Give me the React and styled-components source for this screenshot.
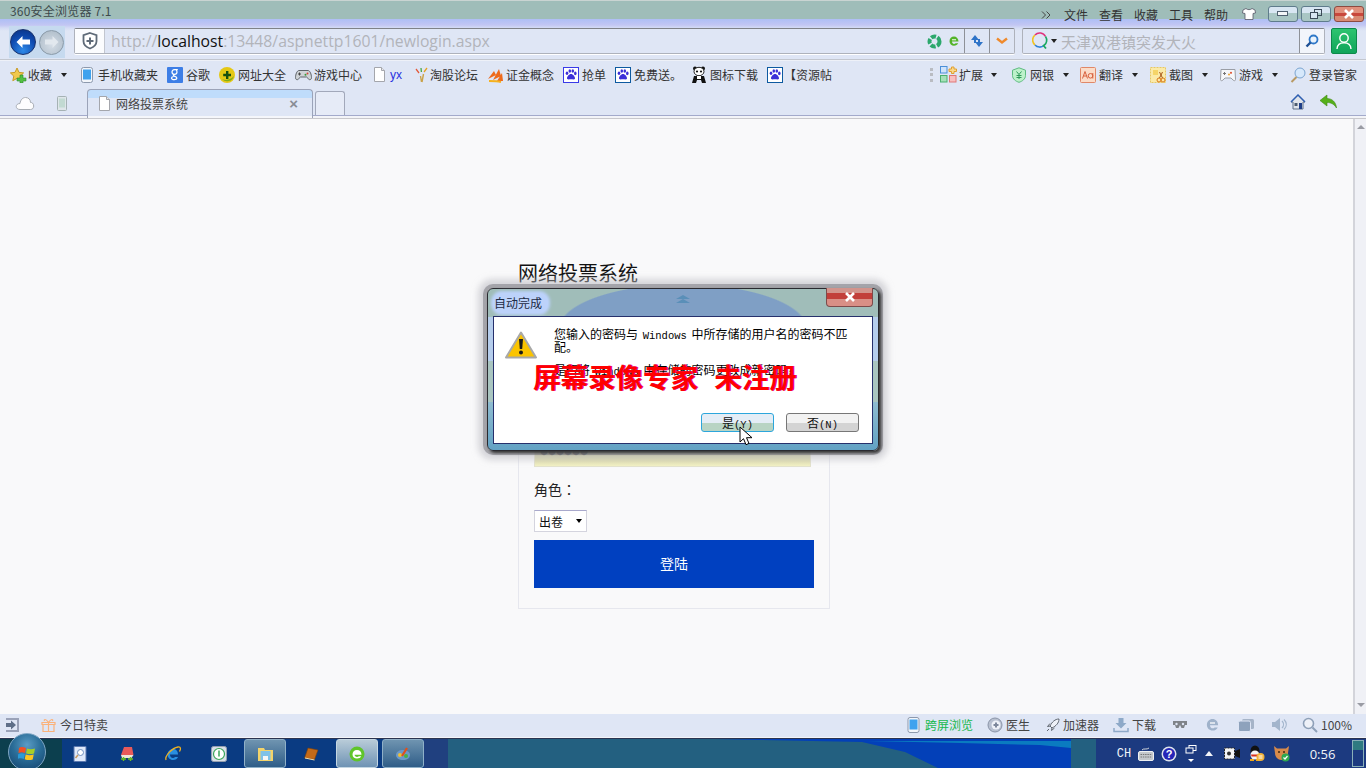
import React from 'react';
import styled, { createGlobalStyle } from 'styled-components';

const Global = createGlobalStyle`
  html, body { margin: 0; padding: 0; overflow: hidden; background: #f9f9fa; }
  body { font-family: "Noto Sans CJK SC", "Liberation Sans", sans-serif; font-size: 12px; color: #333; }
`;

const Frame = styled.div`
  position: relative;
  width: 1366px;
  height: 768px;
  display: flex;
  flex-direction: column;
  overflow: hidden;
`;

const TitleBar = styled.div`
  height: 19px;
  flex: none;
  display: flex;
  align-items: flex-start;
  background: #9fbdb9;
  border-top: 1px solid #c9d4d2;
  box-sizing: border-box;
  position: relative;
  z-index: 2;
`;
const AppName = styled.span`
  margin: 2px 0 0 10px;
  line-height: 16px;
  color: #3d4a4c;
  letter-spacing: 0.2px;
`;
const TitleMenu = styled.div`
  margin-left: auto;
  display: flex;
  align-items: flex-start;
`;
const MenuItem = styled.span`
  width: 35px;
  margin-top: 6px;
  line-height: 16px;
  color: #333;
`;
const MoreItem = styled.span`
  width: 23px;
  margin-top: 10px;
`;
const Shirt = styled.span`
  width: 14px;
  margin: 7px 0 0 3px;
  height: 14px;
`;
const WinButtons = styled.div`
  display: flex;
  gap: 3px;
  margin: 5px 2px 0 12px;
`;
const WinButton = styled.div`
  width: 30px;
  height: 16px;
  box-sizing: border-box;
  border: 1px solid ${p => (p.$close ? '#8d4a40' : '#5f7c8c')};
  border-radius: 3px;
  display: flex;
  align-items: center;
  justify-content: center;
  background: ${p => (p.$close
    ? 'linear-gradient(#e0907c 0 45%, #c8483c 45% 62%, #d88a72 62%)'
    : 'linear-gradient(#d8e6f2 0 45%, #a9c6c4 45% 100%)')};
`;

const NavBar = styled.div`
  height: 41px;
  flex: none;
  display: flex;
  align-items: flex-start;
  box-sizing: border-box;
  padding: 9px 0 0 9px;
  background: linear-gradient(#aebff5 0, #c2c6f3 6px, #d4dcf4 9px, #dfe6f5 12px);
  border-bottom: 1px solid #c3c7cf;
`;
const NavButtons = styled.div`
  width: 56px;
  height: 32px;
  margin-top: -2px;
  display: flex;
  align-items: center;
  background: #c6daef;
`;
const BackButton = styled.div`
  width: 26px;
  height: 26px;
  margin-left: 1px;
  border-radius: 50%;
  box-sizing: border-box;
  border: 1px solid #16306c;
  background: radial-gradient(circle at 50% 85%, #2f8ae8 0, #0f4bb0 55%, #0a2f80 100%);
  display: flex;
  align-items: center;
  justify-content: center;
`;
const ForwardButton = styled(BackButton)`
  width: 25px;
  height: 25px;
  margin-left: 3px;
  border-color: #8a9aa8;
  background: radial-gradient(circle at 50% 60%, #d5dde6 0, #b6c3cf 70%, #a5b3c0 100%);
`;
const Field = styled.div`
  height: 26px;
  box-sizing: border-box;
  display: flex;
  align-items: center;
  background: #dfe6f5;
  border: 1px solid #aeb2bb;
  border-top-color: #7f8288;
  border-radius: 2px;
  box-shadow: 0 1px 0 #fff;
`;
const AddressField = styled(Field)`
  width: 941px;
  margin-left: 9px;
`;
const ShieldCell = styled.div`
  width: 29px;
  height: 100%;
  background: #fbfcfe;
  border-right: 1px solid #c2c6cf;
  display: flex;
  align-items: center;
  justify-content: center;
  flex: none;
`;
const Url = styled.div`
  margin-left: 6px;
  font-family: "Open Sans", sans-serif;
  font-size: 15.75px;
  color: #b2b4ba;
  white-space: nowrap;
  b { font-weight: 400; color: #111; }
`;
const AddressTools = styled.div`
  margin-left: auto;
  height: 100%;
  display: flex;
  align-items: center;
`;
const ToolCell = styled.div`
  width: 24px;
  height: 100%;
  flex: none;
  display: flex;
  align-items: center;
  justify-content: center;
  border-left: 1px solid #8e9198;
`;
const PlainCell = styled.div`
  width: ${p => p.$w}px;
  height: 100%;
  display: flex;
  align-items: center;
  justify-content: center;
`;
const SearchField = styled(Field)`
  width: 303px;
  margin-left: 7px;
  padding-left: 9px;
`;
const SearchText = styled.span`
  margin-left: 4px;
  font-size: 15px;
  color: #b2b4ba;
  white-space: nowrap;
`;
const UserButton = styled.div`
  width: 26px;
  height: 26px;
  margin-left: 6px;
  border-radius: 2px;
  background: linear-gradient(#2dc46f, #0fa45a);
  border: 1px solid #0c8a4a;
  box-sizing: border-box;
  display: flex;
  align-items: center;
  justify-content: center;
`;
const SearchGo = styled.div`
  margin-left: auto;
  width: 24px;
  height: 100%;
  display: flex;
  align-items: center;
  justify-content: center;
  background: #f2f5fb;
  border-left: 1px solid #8e9198;
`;

const BookmarkBar = styled.div`
  height: 28px;
  flex: none;
  display: flex;
  align-items: center;
  box-sizing: border-box;
  padding-left: 10px;
  background: #dfe6f5;
  border-top: 1px solid #eef1f8;
`;
const Bookmark = styled.div`
  width: ${p => p.$w}px;
  flex: none;
  display: flex;
  align-items: center;
  gap: ${p => p.$gap ?? 3}px;
  white-space: nowrap;
  color: #333;
  line-height: 16px;
`;
const Yx = styled.span`
  color: #2a32e0;
  font-family: "Liberation Sans", sans-serif;
`;
const Caret = styled.i`
  width: 0;
  height: 0;
  display: block;
  margin-left: ${p => p.$m ?? 8}px;
  border: 3px solid transparent;
  border-top: 4px solid ${p => p.$c ?? '#222'};
  border-bottom: 0;
`;
const Grip = styled.div`
  width: 0;
  height: 14px;
  flex: none;
  margin: 0 7px 0 87px;
  border-left: 3px dotted #b9bcc2;
`;

const TabRow = styled.div`
  height: 30px;
  flex: none;
  display: flex;
  align-items: flex-end;
  box-sizing: border-box;
  background: linear-gradient(#dfe6f5 0 27px, #a3aacb 27px 28px, #f3f4f8 28px);
`;
const TabIcons = styled.div`
  width: 87px;
  height: 30px;
  display: flex;
  align-items: center;
  flex: none;
  padding-left: 15px;
  box-sizing: border-box;
  gap: 22px;
`;
const Tab = styled.div`
  width: 226px;
  height: 29px;
  flex: none;
  box-sizing: border-box;
  display: flex;
  align-items: center;
  padding: 0 14px 2px 10px;
  gap: 5px;
  border: 1px solid #9ba3b8;
  border-bottom: 0;
  border-radius: 4px 4px 0 0;
  background: linear-gradient(#bfdcfb 0 8px, #dfe6f5 8px 26px, #f5f6fa 26px);
  color: #444;
`;
const TabClose = styled.span`
  margin-left: auto;
  font: bold 15px "Liberation Sans", sans-serif;
  color: #888c94;
`;
const NewTab = styled.div`
  width: 30px;
  height: 24px;
  flex: none;
  margin: 0 0 3px 2px;
  box-sizing: border-box;
  border: 1px solid #a2a8ba;
  border-bottom: 0;
  border-radius: 3px 3px 0 0;
  background: #e6ebf7;
`;
const TabRight = styled.div`
  margin-left: auto;
  width: 76px;
  height: 27px;
  margin-bottom: 3px;
  display: flex;
  align-items: center;
  gap: 13px;
`;

const Viewport = styled.div`
  flex: 1;
  min-height: 0;
  display: flex;
  background: #f9f9fa;
  border-top: 1px solid #c8c8cc;
`;
const Page = styled.div`
  flex: 1;
  padding: 140px 0 0 518px;
  box-sizing: border-box;
`;
const PageTitle = styled.h1`
  margin: 0 0 4px;
  font-size: 20px;
  font-weight: 400;
  line-height: 28px;
  color: #111;
`;
const LoginCard = styled.div`
  width: 312px;
  height: 318px;
  box-sizing: border-box;
  padding: 35px 15px 0;
  background: #f9f9fa;
  border: 1px solid #e6e7ee;
  display: flex;
  flex-direction: column;
`;
const FieldLabel = styled.label`
  font-family: "Noto Sans CJK TC", sans-serif;
  font-size: 14px;
  line-height: 20px;
  color: #222;
`;
const TextInput = styled.div`
  width: 277px;
  height: 36px;
  margin: 8px 0 12px;
  box-sizing: border-box;
  border: 1px solid #e3e2cc;
  background: linear-gradient(#8f8c68 0 50%, #c4c08e 55%, #f3f2c4);
  font-size: 8px;
  line-height: 39px;
  padding: 0 0 0 5px;
  color: #000;
`;
const RoleSelect = styled.div`
  width: 53px;
  height: 22px;
  margin-top: 11px;
  box-sizing: border-box;
  border: 1px solid #d4d4de;
  border-top-color: #a9a9cc;
  background: #fff;
  display: flex;
  align-items: center;
  padding-left: 4px;
  font-size: 12px;
  color: #111;
`;
const LoginButton = styled.button`
  width: 280px;
  height: 48px;
  margin-top: 8px;
  padding: 0 0 3px;
  border: 0;
  background: #0040c0;
  color: #fff;
  font: 14px "Noto Sans CJK SC", sans-serif;
`;
const Scrollbar = styled.div`
  width: 13px;
  flex: none;
  box-sizing: border-box;
  background: #f0f1f6;
  border-left: 2px solid #d3d4da;
  display: flex;
  flex-direction: column;
  justify-content: space-between;
  align-items: center;
  padding: 6px 0 7px;
`;
const ScrollUp = styled.i`
  display: block;
  width: 0;
  height: 0;
  border: 4px solid transparent;
  border-bottom: 4px solid #9a9ca4;
  border-top: 0;
`;
const ScrollDown = styled(ScrollUp)`
  border-bottom: 0;
  border-top: 4px solid #9a9ca4;
`;

const StatusBar = styled.div`
  height: 24px;
  flex: none;
  display: flex;
  align-items: center;
  background: #dfe6f5;
  padding: 0 0 2px 4px;
  box-sizing: border-box;
  border-bottom: 1px solid #f3f4f8;
`;
const StatusItem = styled.div`
  width: ${p => p.$w}px;
  flex: none;
  margin-left: ${p => p.$m ?? 0}px;
  display: flex;
  align-items: center;
  gap: ${p => p.$gap ?? 3}px;
  white-space: nowrap;
  color: ${p => p.$c ?? '#444'};
`;

const Taskbar = styled.div`
  position: relative;
  height: 30px;
  flex: none;
  display: flex;
  align-items: center;
  border-top: 1px solid #2a3350;
  box-sizing: border-box;
  background: linear-gradient(90deg, #0c3f4e 0 62px, #0a3b82 62px 424px, #20407f 424px 448px,
    #236080 448px 1096px, #1c3a80 1096px);
  &::before {
    content: "";
    position: absolute;
    inset: 0;
    background: #0340b8;
    clip-path: polygon(715px 0, 1071px 0, 1071px 30px, 940px 30px, 905px 13px, 862px 3px, 760px 1px);
  }
  &::after {
    content: "";
    position: absolute;
    inset: 0;
    background: #0a7bc0;
    clip-path: polygon(866px 2px, 1071px 2px, 1071px 9px, 1040px 6px, 960px 4px);
  }
`;
const StartOrb = styled.div`
  position: absolute;
  left: 8px;
  top: -6px;
  width: 38px;
  height: 38px;
  border-radius: 50%;
  box-sizing: border-box;
  border: 1px solid #7fa6c4;
  background: radial-gradient(circle at 50% 30%, #5b9cc4 0, #2a6d98 45%, #123f6a 100%);
  display: flex;
  align-items: center;
  justify-content: center;
  z-index: 3;
`;
const TaskSlot = styled.div`
  position: relative;
  z-index: 1;
  width: ${p => p.$w ?? 42}px;
  height: 29px;
  flex: none;
  margin-left: ${p => p.$m ?? 4}px;
  display: flex;
  align-items: center;
  justify-content: center;
  box-sizing: border-box;
  border-radius: 3px;
  ${p => p.$open && `
    border: 1px solid #8fb0c8;
    background: linear-gradient(#6f94b0, #2f5d88);
  `}
  ${p => p.$active && `
    border: 1px solid #c4d6e2;
    background: linear-gradient(#b8cbd8, #6f93b4);
  `}
`;
const TaskList = styled.div`
  margin-left: 60px;
  display: flex;
  align-items: center;
`;
const Tray = styled.div`
  position: relative;
  z-index: 1;
  margin-left: auto;
  height: 100%;
  display: flex;
  align-items: center;
`;
const TrayItem = styled.div`
  width: ${p => p.$w}px;
  display: flex;
  justify-content: center;
  align-items: center;
  flex: none;
  color: #f0f4f8;
`;
const ChLabel = styled(TrayItem)`
  font: 12px "Liberation Mono", monospace;
`;
const Clock = styled(TrayItem)`
  font: 13px "Open Sans", sans-serif;
`;
const ShowDesktop = styled.div`
  width: 12px;
  height: 27px;
  margin: 0 2px 0 0;
  border: 1px solid #8ab0b8;
  box-sizing: border-box;
  background: linear-gradient(#2f7a80 0 35%, #1c3a80 35%);
`;

const Dialog = styled.div`
  position: absolute;
  left: 487px;
  top: 288px;
  width: 392px;
  height: 163px;
  box-sizing: border-box;
  padding: 0 5px 6px;
  display: flex;
  flex-direction: column;
  border: 1px solid #2a2a30;
  border-radius: 6px;
  box-shadow: 2px 2px 3px #333, 0 0 0 4px rgba(130, 130, 136, 0.6), 0 0 6px 9px rgba(190, 190, 196, 0.6);
  background:
    radial-gradient(ellipse 125px 45px at 50% 40px, #7f9fc5 98%, transparent 100%) no-repeat,
    linear-gradient(#a0bdb9 0 28px, #b5cdec 28px 45%, #a9c5c0 45% 70%, #8fbcd0 70%, #62a2c4 100%);
  z-index: 4;
`;
const DialogHead = styled.div`
  position: relative;
  height: 27px;
  flex: none;
  display: flex;
  align-items: flex-start;
`;
const HeadMark = styled.div`
  position: absolute;
  left: 183px;
  top: 6px;
`;
const DialogTitle = styled.span`
  margin-top: 4px;
  padding: 1px 6px 1px 1px;
  line-height: 18px;
  border-radius: 9px;
  color: #1c2a44;
  background: #bcd2fa;
  box-shadow: 0 0 3px 2px #bcd2fa;
`;
const DialogClose = styled.div`
  margin: -1px 0 0 auto;
  width: 47px;
  height: 19px;
  box-sizing: border-box;
  border: 1px solid #7d4a4a;
  border-top: 0;
  border-radius: 0 0 4px 4px;
  background: linear-gradient(#d2948c 0 25%, #c23f3a 25% 60%, #d98f86 60%);
  display: flex;
  align-items: center;
  justify-content: center;
`;
const DialogBody = styled.div`
  position: relative;
  flex: 1;
  display: flex;
  flex-direction: column;
  box-sizing: border-box;
  padding: 10px 13px 0 11px;
  background: #fff;
  border: 1px solid #26306c;
`;
const Message = styled.div`
  display: flex;
  gap: 16px;
`;
const WarnWrap = styled.div`
  width: 33px;
  flex: none;
  padding-top: 4px;
`;
const MessageText = styled.div`
  width: 298px;
  font-size: 12px;
  line-height: 13px;
  word-spacing: 2px;
  color: #000;
  p { margin: 0 0 10px; }
`;
const Mono = styled.span`
  font: 10.5px/0 "Liberation Mono", monospace;
`;
const Watermark = styled.div`
  position: absolute;
  left: 39px;
  top: 41px;
  font-size: 27.5px;
  font-weight: 700;
  line-height: 36px;
  word-spacing: 10px;
  color: #f00;
  white-space: nowrap;
  text-shadow: 1px 0 #d000a0;
`;
const DialogActions = styled.div`
  margin-top: auto;
  display: flex;
  justify-content: flex-end;
  gap: 12px;
  padding-bottom: 11px;
`;
const DialogButton = styled.button`
  width: 73px;
  height: 19px;
  padding: 0 0 1px;
  box-sizing: border-box;
  border: 1px solid ${p => (p.$primary ? '#2ca6dc' : '#777')};
  border-radius: 3px;
  background: ${p => (p.$primary
    ? 'linear-gradient(#e4edf6 0 50%, #b8d4c4 50%)'
    : 'linear-gradient(#f2f2f2 0 50%, #d4d4d4 50%)')};
  font: 12px/15px "Noto Sans CJK SC", sans-serif;
  color: #111;
`;
const CursorWrap = styled.div`
  position: absolute;
  left: 245px;
  top: 109px;
  width: 14px;
  height: 20px;
`;

/* ---- icons ---- */
const Svg = styled(({ w = 16, h = 16, vb, children, className }) => (
  <svg className={className} width={w} height={h} viewBox={vb || `0 0 ${w} ${h}`}>{children}</svg>
))`
  display: block;
  flex: none;
`;

const Paw = ({ c = '#3a3ae8' }) => (
  <Svg>
    <rect x=".5" y=".5" width="15" height="15" fill="#fff" stroke={c} />
    <g fill="#3c2fd8">
      <ellipse cx="4" cy="6.2" rx="1.3" ry="1.8" />
      <ellipse cx="6.8" cy="4" rx="1.3" ry="1.8" />
      <ellipse cx="9.8" cy="4" rx="1.3" ry="1.8" />
      <ellipse cx="12.3" cy="6.4" rx="1.3" ry="1.8" />
      <path d="M8 7c2 0 4 2.6 4 4.3 0 1.6-2 1-4 1s-4 .6-4-1C4 9.6 6 7 8 7z" />
    </g>
  </Svg>
);
const Doc = ({ w = 13, h = 15 }) => (
  <Svg w={w} h={h} vb="0 0 13 15">
    <path d="M1.5.5h7l3 3v11h-10z" fill="#fff" stroke="#a4a6ac" />
    <path d="M8.5.5v3h3" fill="#e8e8ec" stroke="#a4a6ac" />
  </Svg>
);
const Star = () => (
  <Svg w={17} h={16}>
    <path d="M7 1l2 4.4 4.6.5-3.4 3.2 1 4.6L7 11.400 2.800 13.700l1-4.600L.4 5.900 5 5.400z" fill="#f2c94c" stroke="#c89a24" />
    <path d="M10 8h3v3h3v3h-3v2h-3v-2H7v-3h3z" fill="#53c043" stroke="#2d8c2a" strokeWidth=".6" />
  </Svg>
);
const PhoneIcon = ({ w = 12, h = 16, screen = '#3fa2ee' }) => (
  <Svg w={w} h={h} vb="0 0 12 16">
    <rect x=".5" y=".5" width="11" height="15" rx="2" fill="#f2f5fa" stroke="#8d99ad" />
    <rect x="2" y="2.500" width="8" height="10" fill={screen} />
  </Svg>
);
const GBox = () => (
  <Svg>
    <rect width="16" height="16" rx="1" fill="#3d7ee6" />
    <path d="M10.800 2.600H7.500C5.800 2.600 5 3.800 5 5c0 1.300 1 2.300 2.500 2.300 1.300 0 2.500-1 2.500-2.400 0-1-.8-1.600-.8-1.600M7.200 7.300c-1 .5-1 1.200-.4 1.600 1.600.8 3 1 3 2.200 0 1-1.200 1.600-2.600 1.600-1.500 0-2.700-.6-2.700-1.600 0-.8.8-1.400 2-1.600" fill="none" stroke="#fff" strokeWidth="1.200" />
  </Svg>
);
const NavCircle = () => (
  <Svg>
    <circle cx="8" cy="8" r="8" fill="#e5c815" />
    <path d="M3 12a7 7 0 0 0 12-3 10 10 0 0 1-12 3z" fill="#7fae1a" />
    <path d="M7 4h2.400v2.800H12v2.400H9.400V12H7V9.200H4.200V6.800H7z" fill="#17500f" />
  </Svg>
);
const Gamepad = () => (
  <Svg w={17} h={12} vb="0 0 17 12">
    <path d="M4 1.500h9c2 0 3.500 4 3.500 7 0 2-1.600 3-2.800 1.600L11.500 8h-6L3.300 10.100C2 11.500.5 10.500.5 8.500c0-3 1.500-7 3.500-7z" fill="#cfd3d6" stroke="#5f6468" />
    <circle cx="12.500" cy="4.500" r="1" fill="#d8453a" />
    <circle cx="10.500" cy="5.800" r="1" fill="#3a9a3a" />
    <path d="M3 5h3M4.500 3.500v3" stroke="#444" />
  </Svg>
);
const Sparks = () => (
  <Svg w={13} h={16} vb="0 0 13 16">
    <path d="M6.500 15l-1-6M7 15l1.500-8" stroke="#c9a24a" strokeWidth="1.400" />
    <path d="M1 2l3 4" stroke="#e3593a" strokeWidth="1.300" />
    <path d="M6 1l.4 4" stroke="#46a646" strokeWidth="1.300" />
    <path d="M12 1L9 5" stroke="#e8a020" strokeWidth="1.300" />
  </Svg>
);
const Fan = () => (
  <Svg>
    <path d="M1 12L7 4l2 4zM6 13l6-11 2 7zM10 14l5-8 1 8z" fill="#ee6a1c" />
    <path d="M2 14c4 0 8 0 12 1" stroke="#f5b11e" strokeWidth="2" fill="none" />
  </Svg>
);
const Panda = () => (
  <Svg w={16} h={18} vb="0 0 16 18">
    <circle cx="4" cy="2.500" r="2" fill="#111" />
    <circle cx="12" cy="2.500" r="2" fill="#111" />
    <ellipse cx="8" cy="5.500" rx="5" ry="4.200" fill="#fff" stroke="#222" />
    <circle cx="6" cy="5.500" r="1.100" fill="#111" />
    <circle cx="10" cy="5.500" r="1.100" fill="#111" />
    <path d="M3 10h10l2 7h-4l-1-3H6l-1 3H1z" fill="#111" />
    <path d="M6 10h4v3H6z" fill="#fff" />
  </Svg>
);
const Extend = () => (
  <Svg w={17} h={17}>
    <rect x=".5" y=".5" width="6.500" height="6.500" fill="#cfe3fb" stroke="#4b8fd8" />
    <rect x=".5" y="9.500" width="6.500" height="6.500" fill="#a6e0b8" stroke="#4bb070" />
    <rect x="9.500" y="9.500" width="6.500" height="6.500" fill="#f8c0c0" stroke="#e07878" />
    <path d="M11.500 1h2.500v2h2.500v2.500H14v2h-2.500v-2H9V3h2.500z" fill="#fbd98a" stroke="#e0a030" />
  </Svg>
);
const BankShield = () => (
  <Svg>
    <path d="M8 .8l6.500 2.400v5.300c0 3.500-3.200 5.800-6.500 6.800-3.300-1-6.500-3.300-6.500-6.800V3.200z" fill="#bdf1ca" stroke="#5dbb80" />
    <path d="M5.500 4.500L8 7.500l2.500-3M8 7.500V12M5.500 8.500h5M5.500 10.500h5" fill="none" stroke="#2f9a5a" />
  </Svg>
);
const Translate = () => (
  <Svg>
    <rect x=".5" y=".5" width="15" height="15" rx="1" fill="#fbdcc8" stroke="#e08868" />
    <path d="M2.500 11.500L5 4.500l2.500 7M3.500 9h3" fill="none" stroke="#d8603c" />
    <circle cx="10.500" cy="8.800" r="2.300" fill="none" stroke="#d8603c" />
    <path d="M12.800 6v5.500" stroke="#d8603c" />
  </Svg>
);
const Capture = () => (
  <Svg>
    <rect x=".5" y=".5" width="15" height="15" fill="#fbeaa8" stroke="#e8c860" strokeDasharray="2 1" />
    <rect x="3" y="3" width="5" height="5" fill="#f5d468" />
    <circle cx="9" cy="13" r="2" fill="none" stroke="#d87818" />
    <circle cx="13" cy="13" r="2" fill="none" stroke="#d87818" />
    <path d="M9.500 11l3-6M12.500 11l-3-6" stroke="#a85818" />
  </Svg>
);
const GameBox = () => (
  <Svg w={16} h={14} vb="0 0 16 14">
    <path d="M1 1.500h14l.5 10c0 1.500-1.500 1.500-2.500.5L11 10H5l-2 2c-1 1-2.500 1-2.500-.5z" fill="#f6f7fa" stroke="#9a9ea6" />
    <path d="M3 5h3v1H3zM4 4h1v3H4z" fill="#777" />
    <circle cx="11" cy="4.800" r="1.100" fill="#e05a3a" />
    <circle cx="9" cy="6.500" r="1" fill="#eaa030" />
  </Svg>
);
const ManagerGlass = () => (
  <Svg>
    <circle cx="10" cy="6" r="5" fill="#d6e8fb" stroke="#7ba4d0" />
    <path d="M6.500 10L1.500 15" stroke="#b89a64" strokeWidth="2" />
  </Svg>
);
const MoreArrows = () => (
  <Svg w={10} h={8}>
    <path d="M1 .5L4.500 4 1 7.500M5.500 .5L9 4 5.500 7.500" fill="none" stroke="#444" />
  </Svg>
);
const ShirtIcon = () => (
  <Svg w={14} h={12}>
    <path d="M4 .5L1 2l-.5 3 2.500.5V11.500h8V5.500L13.500 5 13 2 10 .5C9 2 5 2 4 .5z" fill="#fff" stroke="#556" strokeWidth=".8" />
  </Svg>
);
const Shield = () => (
  <Svg w={16} h={18}>
    <path d="M8 1l6.500 2.200v6c0 3.600-3.200 6-6.500 7.300-3.300-1.300-6.500-3.700-6.500-7.300v-6z" fill="#fff" stroke="#5e6a78" strokeWidth="1.800" />
    <path d="M7 5.500h2V8h2.500v2H9v2.500H7V10H4.500V8H7z" fill="#5e6a78" />
  </Svg>
);
const BackArrow = ({ c = '#fff' }) => (
  <Svg w={16} h={14}>
    <path d="M7.500 1L1.500 7l6 6V9.500H15v-5H7.500z" fill={c} />
  </Svg>
);
const ForwardArrow = () => (
  <Svg w={16} h={14}>
    <path d="M8.500 1l6 6-6 6V9.500H1v-5h7.500z" fill="#e2e8ee" />
  </Svg>
);
const Spinner = () => (
  <Svg w={15} h={15}>
    <circle cx="7.500" cy="7.500" r="5" fill="none" stroke="#2ca86c" strokeWidth="4" strokeDasharray="5 1.500" />
  </Svg>
);
const EIcon = ({ w = 12, h = 12, c = '#54b42a' }) => (
  <Svg w={w} h={h} vb="0 0 12 12">
    <path d="M2 6.500h8.500C10.500 3.500 8.500 1.500 6 1.500S1.500 3.500 1.500 6.200 3.500 10.800 6 10.800c2 0 3.500-1 4.200-2.500H7.600C7.200 8.900 6.700 9 6 9 5 9 4 8 4 6.500z" fill={c} />
    <path d="M4 4.800h4" stroke="#fff" />
  </Svg>
);
const SwapArrows = () => (
  <Svg w={14} h={14}>
    <path d="M5 1L1 6h3v3h2V6h3z" fill="#2f74c8" />
    <path d="M9 13l4-5h-3V5H8v3H5z" fill="#2f74c8" />
  </Svg>
);
const Chevron = () => (
  <Svg w={12} h={8}>
    <path d="M1 1.500l5 4 5-4" fill="none" stroke="#ef8a2c" strokeWidth="2.400" />
  </Svg>
);
const SearchLogo = () => (
  <Svg w={16} h={18}>
    <path d="M13.500 4.500A6.500 6.500 0 0 0 3 3" fill="none" stroke="#e0307c" strokeWidth="1.600" />
    <path d="M3 3A6.500 6.500 0 0 0 3 13" fill="none" stroke="#f2c320" strokeWidth="1.600" />
    <path d="M3 13a6.500 6.500 0 0 0 9 .5" fill="none" stroke="#2e82d8" strokeWidth="1.600" />
    <path d="M12 13.500a6.500 6.500 0 0 0 1.500-9" fill="none" stroke="#19a860" strokeWidth="1.600" />
    <path d="M11 13l3 3.500" stroke="#19a860" strokeWidth="1.800" />
  </Svg>
);
const MagnifierBlue = () => (
  <Svg w={14} h={14}>
    <circle cx="8.500" cy="5.500" r="4" fill="#eaf3fc" stroke="#2f78c8" strokeWidth="1.800" />
    <path d="M5.500 8.500L1.500 12.500" stroke="#1e4f94" strokeWidth="2.400" />
  </Svg>
);
const UserIcon = () => (
  <Svg w={18} h={18}>
    <circle cx="9" cy="6" r="4.200" fill="none" stroke="#fff" strokeWidth="1.400" />
    <path d="M2 17c0-4 3-6.300 7-6.300s7 2.300 7 6.300" fill="none" stroke="#fff" strokeWidth="1.400" />
  </Svg>
);
const Cloud = () => (
  <Svg w={20} h={13}>
    <path d="M5 12.500c-5 0-5-6 0-6C5.500 2.500 8 .5 10.500.5c3 0 5 2 5 5 4-.5 4.500 7 0 7z" fill="#fdfdfe" stroke="#a8adb4" />
  </Svg>
);
const TabPhone = () => (
  <Svg w={10} h={15}>
    <rect x=".5" y=".5" width="9" height="14" rx="1" fill="#dfe6ea" stroke="#a5b2b4" />
    <rect x="2" y="2.500" width="6" height="9" fill="#c2dad2" />
  </Svg>
);
const HomeIcon = () => (
  <Svg>
    <path d="M8 1l7 7h-2v7H3V8H1z" fill="#e0e4ea" stroke="#5f7088" />
    <path d="M1 8l7-7 7 7" fill="none" stroke="#2f5fb0" strokeWidth="1.500" />
    <rect x="9" y="9" width="3" height="6" fill="#1f3f88" />
    <rect x="4.500" y="9" width="3" height="3" fill="#4b5b70" />
  </Svg>
);
const GreenBack = () => (
  <Svg w={19} h={15}>
    <path d="M8 1L1 6.500 8 12V8.500c4 0 7 1.500 9.500 5.500C17 8 13 4.500 8 4.500z" fill="#55b01a" stroke="#3f8a12" strokeWidth=".6" />
  </Svg>
);
const Gift = () => (
  <Svg w={15} h={15}>
    <path d="M1 5.500h13v2H1zM2 7.500h11v7H2z" fill="none" stroke="#fbb27a" strokeWidth="1.200" />
    <path d="M7.500 5.500v9M7.500 5.500C5 1.500 2.500 2 3.500 4M7.500 5.500C10 1.500 12.500 2 11.500 4" fill="none" stroke="#fbb27a" strokeWidth="1.200" />
  </Svg>
);
const SideToggle = () => (
  <Svg>
    <path d="M2 2h12v12H2" fill="none" stroke="#9aa2b8" strokeWidth="2" />
    <path d="M2 6h5V3.500L12 8l-5 4.500V10H2z" fill="#5f6f88" />
  </Svg>
);
const Doctor = () => (
  <Svg>
    <circle cx="8" cy="8" r="7" fill="#b8c0d0" stroke="#8a94a8" />
    <circle cx="9" cy="8" r="4.500" fill="#eef1f8" />
    <path d="M8 5.500h2V7h1.500v2H10v1.500H8V9H6.500V7H8z" fill="#7d879b" />
  </Svg>
);
const Rocket = () => (
  <Svg w={14} h={14}>
    <path d="M13 1C9 1 6 4 4 8l2 2c4-2 7-5 7-9zM4.500 8l-3 .5L4 5.500M6 9.500L5.500 12.500 8.500 10M3 11L1 13" fill="#eef1f8" stroke="#5f6670" />
  </Svg>
);
const DownloadIcon = () => (
  <Svg>
    <path d="M5.500 1h5v5h3L8 11.500 2.500 6h3z" fill="#8ea9c8" />
    <path d="M1 11v3.500h14V11" fill="none" stroke="#8ea9c8" strokeWidth="1.500" />
  </Svg>
);
const Glasses = () => (
  <Svg w={16} h={9}>
    <path d="M1 1h14v4h-2l-1 3H9.500L8 5 6.500 8H4L3 5H1z" fill="#7f8388" />
    <circle cx="4.500" cy="4" r="1.200" fill="#dfe6f5" />
    <circle cx="11" cy="4" r="1.200" fill="#dfe6f5" />
  </Svg>
);
const Windows2 = () => (
  <Svg w={16} h={14}>
    <rect x="4" y="1" width="12" height="10" rx="1.500" fill="#a6b4c8" />
    <rect x=".5" y="3" width="12" height="10.500" rx="1.500" fill="#8ea2bc" stroke="#dfe6f5" />
  </Svg>
);
const Speaker = () => (
  <Svg w={16} h={15}>
    <path d="M1 5h3l5-4v13l-5-4H1z" fill="#a3b5cc" />
    <path d="M11 4c2 2 2 5 0 7M13 2.500c3 3 3 7 0 10" fill="none" stroke="#a3b5cc" strokeWidth="1.200" />
  </Svg>
);
const ZoomGlass = () => (
  <Svg w={16} h={16}>
    <circle cx="6.500" cy="6.500" r="5" fill="#eef1f8" stroke="#8ea0b8" strokeWidth="1.600" />
    <path d="M10.500 10.500l4.500 4.500" stroke="#8ea0b8" strokeWidth="2" />
  </Svg>
);
const WinFlag = () => (
  <Svg w={18} h={17}>
    <path d="M1 4c2-1.500 4-1 7 0l-1 5C4.500 8 3 8 .5 9z" fill="#f25022" />
    <path d="M9 4.500c2.500 1 5 1 8 0l-1 5c-3 1-5.500 .7-8-.3z" fill="#a6cf28" />
    <path d="M.3 10c2.500-1 4-1 6.500 0l-1 5c-2-1-4-1-6.500 0z" fill="#2a9bd8" />
    <path d="M7.700 10.500c2.500 1 5 1 8 0l-1 5c-3 1-5.500 .7-8-.3z" fill="#fbc520" />
  </Svg>
);
const SearchDoc = () => (
  <Svg w={14} h={16}>
    <path d="M1 .5h12v15H1z" fill="#dfe9fa" stroke="#5a78b0" />
    <circle cx="7.500" cy="6.500" r="3" fill="#fff" stroke="#7090c0" />
    <path d="M5 9l-2.500 3" stroke="#c89a60" strokeWidth="1.500" />
  </Svg>
);
const NoteAdd = () => (
  <Svg>
    <path d="M5 1h8l1.500 8H2z" fill="#e85a5a" />
    <path d="M2 9h12.500l-2 3H3z" fill="#efe7d8" />
    <path d="M9 13h5M11.500 11v4M2 13h5M4.500 11v4" stroke="#6cc020" strokeWidth="1.400" />
  </Svg>
);
const IeIcon = () => (
  <Svg w={18} h={18}>
    <path d="M4 9.500h10C14 6 12 4 9 4S3.500 6.500 3.500 9.500 6 15 9 15c2.500 0 4.300-1.300 5-3h-3c-.5.700-1.200 1-2 1-1.800 0-3-1.500-3-3.500z" fill="#2a8ee0" />
    <path d="M2 15C.5 11 8 3 14 2c3-.5 3 2 1.500 4.500" fill="none" stroke="#eeb020" strokeWidth="1.300" />
  </Svg>
);
const ClockApp = () => (
  <Svg>
    <rect x=".5" y=".5" width="15" height="15" rx="2" fill="#d9dfe8" stroke="#95a0b0" />
    <circle cx="8" cy="8" r="5.500" fill="#fff" stroke="#3aa65a" strokeWidth="1.200" />
    <path d="M8 4.500v6" stroke="#3aa65a" strokeWidth="1.500" />
  </Svg>
);
const Folder = () => (
  <Svg w={17} h={16}>
    <path d="M1 2h6l1 2h8v11H1z" fill="#f3d36a" />
    <rect x="3.500" y="5" width="10" height="9" fill="#7fc2e8" />
    <rect x="6" y="10" width="5" height="4" fill="#f6f6f6" />
  </Svg>
);
const Book = () => (
  <Svg w={15} h={14}>
    <path d="M4 1l10 2-3.500 9.500L.5 11z" fill="#c46a18" stroke="#7a3f0a" strokeWidth=".6" />
    <path d="M1 11l9.500 2" stroke="#f0e0b0" />
  </Svg>
);
const Browser360 = () => (
  <Svg w={16} h={16}>
    <circle cx="8" cy="8" r="7.500" fill="#5fc52a" />
    <path d="M3.500 8.800h9C12.500 5.800 10.800 4 8 4S3.500 6 3.500 8.500 5.500 12.500 8 12.500c2 0 3.500-1 4.200-2.300H9.800c-.4.500-1 .7-1.800.7-1.300 0-2.500-1-2.500-2.100z" fill="#fff" />
  </Svg>
);
const ColorApp = () => (
  <Svg w={16} h={14}>
    <path d="M1 8c0-3 3-5 7-5s7 2 7 5-3 5-7 5-7-2-7-5z" fill="#6c98c8" />
    <circle cx="5" cy="8" r="2" fill="#f0c030" />
    <circle cx="11" cy="9" r="2" fill="#48b048" />
    <path d="M12 1L7 9" stroke="#e0501c" strokeWidth="2.200" />
  </Svg>
);
const Keyboard = () => (
  <Svg w={16} h={14}>
    <path d="M4 3c1-2 5 0 7-2" fill="none" stroke="#cfd4da" />
    <rect x=".5" y="4.500" width="15" height="9" rx="1.500" fill="#c4c8cc" stroke="#eef0f2" />
    <path d="M2.500 7.500h11M2.500 10h11" stroke="#777" strokeDasharray="1.500 .8" />
  </Svg>
);
const HelpIcon = () => (
  <Svg>
    <circle cx="8" cy="8" r="7.500" fill="#dfe4ec" />
    <circle cx="8" cy="8" r="6" fill="#2525b8" />
    <text x="8" y="12" textAnchor="middle" fill="#fff" fontSize="11" fontWeight="700" fontFamily="Liberation Sans">?</text>
  </Svg>
);
const LangBar = () => (
  <Svg w={12} h={18}>
    <rect x="4" y=".5" width="7" height="5" fill="none" stroke="#fff" />
    <rect x="1" y="3" width="7" height="5" fill="#1c3a80" stroke="#fff" />
    <path d="M3 14h6l-3 3z" fill="#fff" />
  </Svg>
);
const UpTri = () => (
  <Svg w={8} h={5}>
    <path d="M4 0l4 5H0z" fill="#f2f4f8" />
  </Svg>
);
const Camera = () => (
  <Svg w={16} h={13}>
    <rect x=".5" y="1" width="10" height="11" fill="#f4f4f4" stroke="#222" strokeDasharray="2 1" />
    <path d="M11 4l5-2v9l-5-2z" fill="#111" />
    <circle cx="5" cy="6.500" r="2" fill="#333" />
  </Svg>
);
const QQ = () => (
  <Svg w={17} h={17}>
    <ellipse cx="7" cy="6" rx="4.500" ry="5.500" fill="#111" />
    <ellipse cx="7" cy="10" rx="4.500" ry="4.500" fill="#f4f4f4" />
    <path d="M3 9.500h8l-.5 2h-7z" fill="#d8301c" />
    <path d="M2 15h4M8 15h4" stroke="#f0a818" strokeWidth="2" />
    <circle cx="12.500" cy="12" r="4" fill="#f2b23a" />
    <path d="M10.500 11h4M10.500 13h4" stroke="#fff" />
  </Svg>
);
const Guard = () => (
  <Svg w={17} h={17}>
    <path d="M1 1l3 2.500h9L16 1l-1 7c0 4-3 7-6.500 7S2 12 2 8z" fill="#d88a4a" />
    <circle cx="6" cy="7" r="1" fill="#40260f" />
    <circle cx="11" cy="7" r="1" fill="#40260f" />
    <circle cx="12.500" cy="12.500" r="4" fill="#2fa850" />
    <path d="M10.500 12.500l1.500 1.500 2.500-3" fill="none" stroke="#fff" strokeWidth="1.200" />
  </Svg>
);
const WarnIcon = () => (
  <Svg w={32} h={28}>
    <path d="M16 1.500L31 26.500H1z" fill="#fbc400" stroke="#a8a8a8" strokeWidth="2" strokeLinejoin="round" />
    <path d="M14 8h4l-.8 10h-2.400z" fill="#1a1a1a" />
    <circle cx="16" cy="21.500" r="2" fill="#1a1a1a" />
  </Svg>
);
const Pointer = () => (
  <Svg w={14} h={20}>
    <path d="M1 1v15l3.500-3.300 2.500 6 3-1.300-2.500-5.700H13z" fill="#fff" stroke="#000" />
  </Svg>
);

const leftMarks = [
  { w: 71, icon: <Star />, text: '收藏', gap: 1, caret: true },
  { w: 86, icon: <PhoneIcon />, text: '手机收藏夹', gap: 5 },
  { w: 52, icon: <GBox />, text: '谷歌' },
  { w: 76, icon: <NavCircle />, text: '网址大全' },
  { w: 78, icon: <Gamepad />, text: '游戏中心', gap: 2 },
  { w: 42, icon: <Doc />, text: <Yx>yx</Yx>, gap: 4 },
  { w: 72, icon: <Sparks />, text: '淘股论坛', gap: 2 },
  { w: 76, icon: <Fan />, text: '证金概念' },
  { w: 52, icon: <Paw />, text: '抢单' },
  { w: 76, icon: <Paw c="#0d5aa0" />, text: '免费送。' },
  { w: 76, icon: <Panda />, text: '图标下载' },
  { w: 76, icon: <Paw c="#0d5aa0" />, text: '【资源帖', gap: 1 },
];
const rightMarks = [
  { w: 71, icon: <Extend />, text: '扩展', gap: 2, caret: true },
  { w: 69, icon: <BankShield />, text: '网银', caret: true },
  { w: 70, icon: <Translate />, text: '翻译', caret: true },
  { w: 70, icon: <Capture />, text: '截图', caret: true },
  { w: 70, icon: <GameBox />, text: '游戏', caret: true },
  { w: 70, icon: <ManagerGlass />, text: '登录管家' },
];

export default function App() {
  return (
    <Frame>
      <Global />
      <TitleBar>
        <AppName>360安全浏览器 7.1</AppName>
        <TitleMenu>
          <MoreItem><MoreArrows /></MoreItem>
          {['文件', '查看', '收藏', '工具', '帮助'].map(m => <MenuItem key={m}>{m}</MenuItem>)}
          <Shirt><ShirtIcon /></Shirt>
          <WinButtons>
            <WinButton>
              <Svg w={12} h={6}><rect x=".5" y=".5" width="10" height="4" fill="#f4f6f8" stroke="#506070" /></Svg>
            </WinButton>
            <WinButton>
              <Svg w={12} h={10}>
                <rect x="4.500" y=".5" width="7" height="6" fill="none" stroke="#3c4a58" />
                <rect x=".5" y="3.500" width="7" height="6" fill="#d8e6f2" stroke="#3c4a58" />
              </Svg>
            </WinButton>
            <WinButton $close>
              <Svg w={12} h={10}><path d="M2 1l8 8M10 1L2 9" stroke="#fff" strokeWidth="2.600" /></Svg>
            </WinButton>
          </WinButtons>
        </TitleMenu>
      </TitleBar>

      <NavBar>
        <NavButtons>
          <BackButton><BackArrow /></BackButton>
          <ForwardButton><ForwardArrow /></ForwardButton>
        </NavButtons>
        <AddressField>
          <ShieldCell><Shield /></ShieldCell>
          <Url>http://<b>localhost</b>:13448/aspnettp1601/newlogin.aspx</Url>
          <AddressTools>
            <PlainCell $w={20}><Spinner /></PlainCell>
            <PlainCell $w={20}><EIcon /></PlainCell>
            <ToolCell><SwapArrows /></ToolCell>
            <ToolCell><Chevron /></ToolCell>
          </AddressTools>
        </AddressField>
        <SearchField>
          <SearchLogo />
          <Caret $m={3} />
          <SearchText>天津双港镇突发大火</SearchText>
          <SearchGo><MagnifierBlue /></SearchGo>
        </SearchField>
        <UserButton><UserIcon /></UserButton>
      </NavBar>

      <BookmarkBar>
        {leftMarks.map((m, i) => (
          <Bookmark key={i} $w={m.w} $gap={m.gap}>
            {m.icon}<span>{m.text}</span>{m.caret && <Caret />}
          </Bookmark>
        ))}
        <Grip />
        {rightMarks.map((m, i) => (
          <Bookmark key={i} $w={m.w} $gap={m.gap}>
            {m.icon}<span>{m.text}</span>{m.caret && <Caret $m={6} />}
          </Bookmark>
        ))}
      </BookmarkBar>

      <TabRow>
        <TabIcons>
          <Cloud />
          <TabPhone />
        </TabIcons>
        <Tab><Doc />网络投票系统<TabClose>×</TabClose></Tab>
        <NewTab />
        <TabRight>
          <HomeIcon />
          <GreenBack />
        </TabRight>
      </TabRow>

      <Viewport>
        <Page>
          <PageTitle>网络投票系统</PageTitle>
          <LoginCard>
            <FieldLabel>用户名：</FieldLabel>
            <TextInput />
            <FieldLabel>密码：</FieldLabel>
            <TextInput>●●●●●●</TextInput>
            <FieldLabel>角色：</FieldLabel>
            <RoleSelect>出卷<Caret $m={13} $c="#000" /></RoleSelect>
            <LoginButton>登陆</LoginButton>
          </LoginCard>
        </Page>
        <Scrollbar>
          <ScrollUp />
          <ScrollDown />
        </Scrollbar>
      </Viewport>

      <StatusBar>
        <StatusItem $w={37}><SideToggle /></StatusItem>
        <StatusItem $w={100} $gap={4}><Gift />今日特卖</StatusItem>
        <StatusItem $w={73} $m={766} $gap={5} $c="#18b84e"><PhoneIcon w={13} h={16} />跨屏浏览</StatusItem>
        <StatusItem $w={59} $m={7}><Doctor />医生</StatusItem>
        <StatusItem $w={67}><Rocket />加速器</StatusItem>
        <StatusItem $w={59}><DownloadIcon />下载</StatusItem>
        <StatusItem $w={33}><Glasses /></StatusItem>
        <StatusItem $w={33}><EIcon w={15} h={15} c="#9fb2ca" /></StatusItem>
        <StatusItem $w={33}><Windows2 /></StatusItem>
        <StatusItem $w={31}><Speaker /></StatusItem>
        <StatusItem $w={52}><ZoomGlass />100%</StatusItem>
      </StatusBar>

      <Taskbar>
        <StartOrb><WinFlag /></StartOrb>
        <TaskList>
          <TaskSlot $m={0} $w={40}><SearchDoc /></TaskSlot>
          <TaskSlot $m={6}><NoteAdd /></TaskSlot>
          <TaskSlot $m={4}><IeIcon /></TaskSlot>
          <TaskSlot $m={4}><ClockApp /></TaskSlot>
          <TaskSlot $m={4} $open><Folder /></TaskSlot>
          <TaskSlot $m={4}><Book /></TaskSlot>
          <TaskSlot $m={4} $active><Browser360 /></TaskSlot>
          <TaskSlot $m={4} $open><ColorApp /></TaskSlot>
        </TaskList>
        <Tray>
          <ChLabel $w={28}>CH</ChLabel>
          <TrayItem $w={16}><Keyboard /></TrayItem>
          <TrayItem $w={30}><HelpIcon /></TrayItem>
          <TrayItem $w={14}><LangBar /></TrayItem>
          <TrayItem $w={22}><UpTri /></TrayItem>
          <TrayItem $w={24}><Camera /></TrayItem>
          <TrayItem $w={25}><QQ /></TrayItem>
          <TrayItem $w={24}><Guard /></TrayItem>
          <Clock $w={59}>0:56</Clock>
          <ShowDesktop />
        </Tray>
      </Taskbar>

      <Dialog>
        <DialogHead>
          <DialogTitle>自动完成</DialogTitle>
          <HeadMark>
            <Svg w={14} h={8}><path d="M7 0l7 4H0zM7 4l7 4H0z" fill="#5a8fb8" /></Svg>
          </HeadMark>
          <DialogClose>
            <Svg w={12} h={10}><path d="M2 1l8 8M10 1L2 9" stroke="#fff" strokeWidth="2.600" /></Svg>
          </DialogClose>
        </DialogHead>
        <DialogBody>
          <Message>
            <WarnWrap><WarnIcon /></WarnWrap>
            <MessageText>
              <p>您输入的密码与 <Mono>Windows</Mono> 中所存储的用户名的密码不匹配。</p>
              <p>是否将 <Mono>Windows</Mono> 中存储的密码更改成新密码?</p>
            </MessageText>
          </Message>
          <Watermark>屏幕录像专家 未注册</Watermark>
          <DialogActions>
            <DialogButton $primary>是<Mono>(Y)</Mono></DialogButton>
            <DialogButton>否<Mono>(N)</Mono></DialogButton>
          </DialogActions>
          <CursorWrap><Pointer /></CursorWrap>
        </DialogBody>
      </Dialog>
    </Frame>
  );
}
